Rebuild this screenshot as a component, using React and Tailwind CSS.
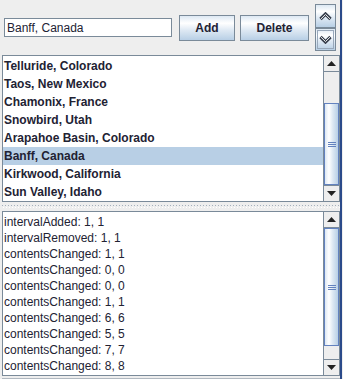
import React from "react";

const FONT = { fontFamily: '"Liberation Sans", Arial, sans-serif' };

const btnGrad =
  "bg-[linear-gradient(to_bottom,#dde8f3_0%,#ffffff_30%,#dde8f3_60%,#b8cfe5_100%)]";
const thumbGrad =
  "bg-[linear-gradient(to_right,#dde8f3_0%,#ffffff_30%,#dde8f3_60%,#b8cfe5_100%)]";

function Chevron({ down }) {
  return (
    <svg width="13" height="9" viewBox="0 0 13 9">
      <polyline
        points={down ? "1.5,2 6.5,7 11.5,2" : "1.5,7 6.5,2 11.5,7"}
        fill="none"
        stroke="#333a48"
        strokeWidth="3.2"
        strokeLinejoin="miter"
      />
      <polyline
        points={down ? "2,2.2 6.5,6.6 11,2.2" : "2,6.8 6.5,2.4 11,6.8"}
        fill="none"
        stroke="#ffffff"
        strokeWidth="1"
      />
    </svg>
  );
}

function Tri({ down }) {
  return (
    <svg width="9" height="5" viewBox="0 0 9 5">
      <polygon points={down ? "0,0 9,0 4.5,5" : "0,5 9,5 4.5,0"} fill="#222" />
    </svg>
  );
}

function ScrollBar({ before, thumb }) {
  return (
    <div className="w-[16px] flex flex-col border-l border-[#7a8a99] bg-[#eeeeee]">
      <div className="h-[16px] flex items-center justify-center border-b border-[#7a8a99] bg-[#eeeeee] shrink-0">
        <Tri />
      </div>
      <div className="flex-1 flex flex-col">
        <div style={{ height: before }} className="shrink-0" />
        <div
          style={{ height: thumb }}
          className={`shrink-0 border border-[#6382bf] ${thumbGrad} flex items-center justify-center`}
        >
          <div className="flex flex-col gap-[1px] w-[8px]">
            <div className="h-[1px] bg-[#6382bf]" />
            <div className="h-[1px] bg-[#6382bf]" />
            <div className="h-[1px] bg-[#6382bf]" />
          </div>
        </div>
        <div className="flex-1" />
      </div>
      <div className="h-[16px] flex items-center justify-center border-t border-[#7a8a99] bg-[#eeeeee] shrink-0">
        <Tri down />
      </div>
    </div>
  );
}

const items = [
  "Telluride, Colorado",
  "Taos, New Mexico",
  "Chamonix, France",
  "Snowbird, Utah",
  "Arapahoe Basin, Colorado",
  "Banff, Canada",
  "Kirkwood, California",
  "Sun Valley, Idaho",
];

const log = [
  "intervalAdded: 1, 1",
  "intervalRemoved: 1, 1",
  "contentsChanged: 1, 1",
  "contentsChanged: 0, 0",
  "contentsChanged: 0, 0",
  "contentsChanged: 1, 1",
  "contentsChanged: 6, 6",
  "contentsChanged: 5, 5",
  "contentsChanged: 7, 7",
  "contentsChanged: 8, 8",
];

export default function App() {
  return (
    <div
      className="w-[343px] h-[379px] bg-[#eeeeee] flex overflow-hidden text-[#222233]"
      style={FONT}
    >
      <div className="w-[340px] flex flex-col pl-[2px]">
        {/* top panel */}
        <div className="h-[55px] flex items-center pl-[2px] shrink-0">
          <div className="w-[168px] h-[19px] bg-white border border-[#7a8a99] flex items-center pl-[2px] text-[12px]">
            Banff, Canada
          </div>
          <button
            className={`ml-[7px] w-[56px] h-[26px] border border-[#7a8a99] ${btnGrad} text-[12px] font-bold flex items-center justify-center`}
          >
            Add
          </button>
          <button
            className={`ml-[5px] w-[69px] h-[26px] border border-[#7a8a99] ${btnGrad} text-[12px] font-bold flex items-center justify-center`}
          >
            Delete
          </button>
          <div className="ml-[6px] w-[21px] flex flex-col">
            <div
              className={`h-[24px] border border-[#7a8a99] ${btnGrad} flex items-center justify-center`}
            >
              <Chevron />
            </div>
            <div
              className={`h-[23px] border border-[#7a8a99] ${btnGrad} flex items-center justify-center`}
            >
              <div className="w-[17px] h-[19px] border border-[#99a8ba] flex items-center justify-center">
                <Chevron down />
              </div>
            </div>
          </div>
        </div>

        {/* list pane */}
        <div className="h-[147px] shrink-0 border border-[#7a8a99] bg-white flex">
          <div className="flex-1 pt-[1px] overflow-hidden">
            {items.map((t) => (
              <div
                key={t}
                className={`h-[18px] leading-[18px] pl-[1px] text-[12px] font-bold ${
                  t === "Banff, Canada" ? "bg-[#b8cfe5]" : ""
                }`}
              >
                {t}
              </div>
            ))}
          </div>
          <ScrollBar before={31} thumb={82} />
        </div>

        {/* divider */}
        <div className="h-[9px] shrink-0 flex flex-col justify-center gap-[1px]">
          <div className="h-[1px] bg-[repeating-linear-gradient(to_right,#a4b0bc_0_1px,transparent_1px_3px)]" />
          <div className="h-[1px] ml-[1px] bg-[repeating-linear-gradient(to_right,#ffffff_0_1px,transparent_1px_3px)]" />
        </div>

        {/* log pane */}
        <div className="h-[165px] shrink-0 border border-[#7a8a99] bg-white flex">
          <div className="flex-1 pt-[2px] pl-[1px] overflow-hidden">
            {log.map((t, i) => (
              <div key={i} className="h-[16px] leading-[16px] text-[12px]">
                {t}
              </div>
            ))}
          </div>
          <ScrollBar before={0} thumb={118} />
        </div>
        <div className="flex-1 flex flex-col justify-end">
          <div className="h-[1px] bg-[#b0b8c0]" />
        </div>
      </div>
      <div className="w-[2px] bg-[#2b4a8a]" />
    </div>
  );
}
